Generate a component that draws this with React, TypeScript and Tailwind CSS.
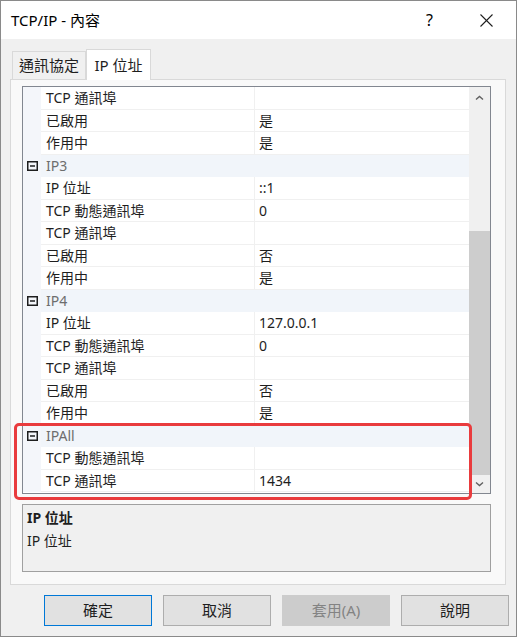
import React from 'react';

type Row = { n?: string; v?: string; g?: string };

const ROWS: Row[] = [
  { n: 'TCP 通訊埠', v: '' },
  { n: '已啟用', v: '是' },
  { n: '作用中', v: '是' },
  { g: 'IP3' },
  { n: 'IP 位址', v: '::1' },
  { n: 'TCP 動態通訊埠', v: '0' },
  { n: 'TCP 通訊埠', v: '' },
  { n: '已啟用', v: '否' },
  { n: '作用中', v: '是' },
  { g: 'IP4' },
  { n: 'IP 位址', v: '127.0.0.1' },
  { n: 'TCP 動態通訊埠', v: '0' },
  { n: 'TCP 通訊埠', v: '' },
  { n: '已啟用', v: '否' },
  { n: '作用中', v: '是' },
  { g: 'IPAll' },
  { n: 'TCP 動態通訊埠', v: '' },
  { n: 'TCP 通訊埠', v: '1434' },
];

const FONT = '"Noto Sans", "Noto Sans CJK TC", sans-serif';

function Collapse() {
  return (
    <svg width="11" height="10" viewBox="0 0 11 10">
      <rect x="0.75" y="0.75" width="9.5" height="8.5" fill="none" stroke="#1e1e1e" strokeWidth="1.5" />
      <line x1="3" y1="5" x2="8" y2="5" stroke="#1e1e1e" strokeWidth="1.5" />
    </svg>
  );
}

function Chevron({ down }: { down?: boolean }) {
  return (
    <svg width="9" height="6" viewBox="0 0 9 6">
      <polyline
        points={down ? '1,1.5 4.5,4.5 8,1.5' : '1,4.5 4.5,1.5 8,4.5'}
        fill="none"
        stroke="#606060"
        strokeWidth="1.4"
      />
    </svg>
  );
}

function PropRow({ row }: { row: Row }) {
  if (row.g) {
    return (
      <div className="flex h-[22.5px]">
        <div className="w-[18px] flex items-center justify-center pl-[1px] bg-[#f4f6fa]">
          <Collapse />
        </div>
        <div className="flex-1 flex items-center pl-[5px] bg-[#f1f5fa] text-[#6d6d6d]">{row.g}</div>
      </div>
    );
  }
  return (
    <div className="flex h-[22.5px]">
      <div className="w-[18px] bg-[#f4f6fa]" />
      <div className="w-[214px] flex items-center pl-[5px] border-r border-b border-[#f0f0f0] text-[#1e1e1e]">
        {row.n}
      </div>
      <div className="flex-1 flex items-center pl-[4px] border-b border-[#f0f0f0] text-[#1e1e1e]">{row.v}</div>
    </div>
  );
}

function Btn({ label, primary, disabled }: { label: string; primary?: boolean; disabled?: boolean }) {
  return (
    <div
      className={`w-[108px] h-[31px] flex items-center justify-center text-[15px] border ${
        primary
          ? 'border-[#0078d7] bg-[#e1e1e1] text-[#1e1e1e]'
          : disabled
          ? 'border-[#cccccc] bg-[#cccccc] text-[#838383]'
          : 'border-[#adadad] bg-[#e1e1e1] text-[#1e1e1e]'
      }`}
    >
      {label}
    </div>
  );
}

export default function App() {
  return (
    <div
      className="relative w-[517px] h-[637px] border border-[#8a8a8a] bg-[#f0f0f0] flex flex-col overflow-hidden"
      style={{ fontFamily: FONT }}
    >
      <div className="h-[38px] bg-white flex items-center pl-[10px] text-[15px] text-black shrink-0">
        <span>TCP/IP - 內容</span>
        <span className="ml-auto mr-[47px] text-[16px]">?</span>
        <svg width="13" height="13" viewBox="0 0 13 13" className="mr-[23px]">
          <line x1="0.5" y1="0.5" x2="12.5" y2="12.5" stroke="#1e1e1e" strokeWidth="1.1" />
          <line x1="12.5" y1="0.5" x2="0.5" y2="12.5" stroke="#1e1e1e" strokeWidth="1.1" />
        </svg>
      </div>

      <div className="pl-[9px] pt-[10px]">
        <div className="flex items-end h-[30px] pl-[2px]">
          <div className="w-[74px] h-[28px] flex items-center justify-center border border-b-0 border-[#d9d9d9] bg-[#f0f0f0] text-[15px] text-[#1e1e1e]">
            通訊協定
          </div>
          <div className="relative z-10 -mb-px w-[65px] h-[31px] flex items-center justify-center border border-b-0 border-[#d9d9d9] bg-white text-[15px] text-[#1e1e1e]">
            IP 位址
          </div>
        </div>

        <div className="w-[496px] h-[506px] border border-[#d9d9d9] bg-[#f9f9f9] pl-[11px] pt-[6px] text-[14px]">
          <div className="w-[469px] h-[408px] border border-[#828790] bg-white flex">
            <div className="w-[446px] flex flex-col">
              {ROWS.map((r, i) => (
                <PropRow key={i} row={r} />
              ))}
            </div>
            <div className="flex-1 flex flex-col bg-[#f0f0f0]">
              <div className="h-[20px] flex items-center justify-center pt-[1px]">
                <Chevron />
              </div>
              <div className="h-[124px]" />
              <div className="h-[244px] bg-[#cdcdcd]" />
              <div className="flex-1 flex items-center justify-center">
                <Chevron down />
              </div>
            </div>
          </div>

          <div className="mt-[10px] w-[469px] h-[68px] border border-[#a0a0a0] bg-[#f0f0f0] px-[4px] pt-[2px] text-[#1e1e1e]">
            <div className="font-bold h-[21px] flex items-center">IP 位址</div>
            <div className="h-[24px] flex items-center">IP 位址</div>
          </div>
        </div>
      </div>

      <div className="flex gap-[11px] pl-[43px] mt-[10px]">
        <Btn label="確定" primary />
        <Btn label="取消" />
        <Btn label="套用(A)" disabled />
        <Btn label="說明" />
      </div>

      <div className="absolute left-[13px] top-[422px] w-[458px] h-[77px] border-[3px] border-[#e93b3d] rounded-[5px]" />
    </div>
  );
}
